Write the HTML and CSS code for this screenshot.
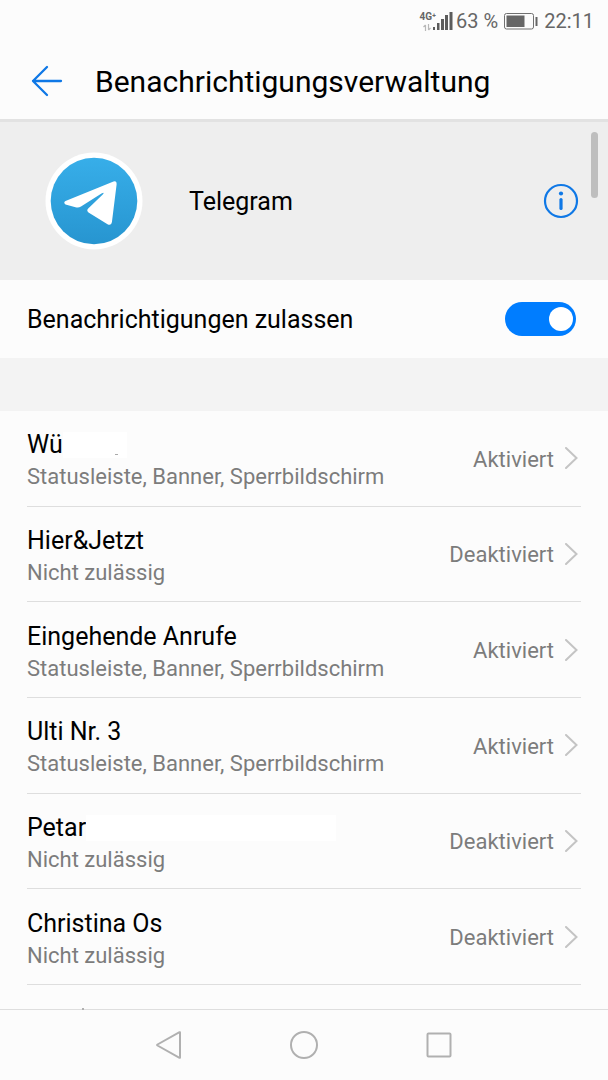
FILE: index.html
```html
<!DOCTYPE html>
<html lang="de">
<head>
<meta charset="utf-8">
<meta name="viewport" content="width=device-width, initial-scale=1">
<title>Benachrichtigungsverwaltung</title>
<link rel="stylesheet" href="styles.css">
</head>
<body>
<div class="status">
  <span class="network"><span class="network-type">4G⁺</span>
    <svg class="transfer" width="8" height="7" viewBox="0 0 8 7"><path d="M2.500 7V1M.5 3 2.500 1M5.500 0v6M7.500 4 5.500 6" fill="none" stroke="#b8b8b8" stroke-width="1.200"/></svg>
  </span>
  <svg width="20" height="18" viewBox="0 0 20 18" fill="#5c5c5c"><path d="M0 15h2v3H0zM4 11h2.500v7H4zM8 7h3v11H8zM12 3h3v15h-3zM16.500 0h3v18h-3z"/></svg>
  <span class="percent">63 %</span>
  <svg class="battery" width="34" height="17" viewBox="0 0 34 17"><rect x=".5" y=".5" width="29" height="15.500" rx="2" fill="none" stroke="#707070"/><path d="M2.500 2.500h18v11.500h-18zM31.500 4h2v9h-2z" fill="#666"/></svg>
  <time>22:11</time>
</div>
<header class="header">
  <button class="icon-button" aria-label="Zurück"><svg width="32" height="32" viewBox="0 0 32 32"><path d="M16 2 2 16l14 14M2 16h28" fill="none" stroke="#0f78e6" stroke-width="2.300" stroke-linecap="round" stroke-linejoin="round"/></svg></button>
  <h1>Benachrichtigungsverwaltung</h1>
</header>
<main class="content">
  <section class="app">
    <svg class="logo" width="98" height="98" viewBox="0 0 98 98">
      <defs><linearGradient id="sky" x2="0" y2="1"><stop stop-color="#37aee9"/><stop offset="1" stop-color="#2795d0"/></linearGradient></defs>
      <circle cx="49" cy="49" r="48.500" fill="#fff"/><circle cx="49" cy="49" r="43.300" fill="url(#sky)"/>
      <path d="M20.500 49 68.500 29.400Q71.800 28.300 71.600 32.500L67 69.500Q66.200 74.200 62.500 72.200L43.500 60.600Q41.200 58.500 43.200 56.600L58 42.300Q59.800 39.600 56.500 41.400L36 54.600Q33.500 56.100 30.500 55.200L20.500 52.400Q18 50.700 20.500 49Z" fill="#fff"/>
    </svg>
    <h2>Telegram</h2>
    <button class="icon-button info" aria-label="App-Info"><svg width="36" height="36" viewBox="0 0 36 36"><circle cx="18" cy="18" r="16" fill="none" stroke="#0f78e6" stroke-width="2.200"/><circle cx="18" cy="10.500" r="2.100" fill="#0f78e6"/><path d="M18 16.500v9" stroke="#0f78e6" stroke-width="3.200" stroke-linecap="round"/></svg></button>
    <span class="scrollbar"></span>
  </section>
  <div class="allow">
    <label for="allow">Benachrichtigungen zulassen</label>
    <input class="switch" id="allow" type="checkbox" role="switch" checked>
  </div>
  <ul class="channels">
    <li><a class="channel" href="#"><span class="text"><span class="name">Wü<span class="mask mask-short"></span></span><span class="detail">Statusleiste, Banner, Sperrbildschirm</span></span><span class="state">Aktiviert</span><svg class="chevron" viewBox="0 0 13 22"><path d="m1 1 10.500 10L1 21"/></svg></a></li>
    <li><a class="channel" href="#"><span class="text"><span class="name">Hier&amp;Jetzt</span><span class="detail">Nicht zulässig</span></span><span class="state">Deaktiviert</span><svg class="chevron" viewBox="0 0 13 22"><path d="m1 1 10.500 10L1 21"/></svg></a></li>
    <li><a class="channel" href="#"><span class="text"><span class="name">Eingehende Anrufe</span><span class="detail">Statusleiste, Banner, Sperrbildschirm</span></span><span class="state">Aktiviert</span><svg class="chevron" viewBox="0 0 13 22"><path d="m1 1 10.500 10L1 21"/></svg></a></li>
    <li><a class="channel" href="#"><span class="text"><span class="name">Ulti Nr. 3</span><span class="detail">Statusleiste, Banner, Sperrbildschirm</span></span><span class="state">Aktiviert</span><svg class="chevron" viewBox="0 0 13 22"><path d="m1 1 10.500 10L1 21"/></svg></a></li>
    <li><a class="channel" href="#"><span class="text"><span class="name">Petar<span class="mask mask-long"></span></span><span class="detail">Nicht zulässig</span></span><span class="state">Deaktiviert</span><svg class="chevron" viewBox="0 0 13 22"><path d="m1 1 10.500 10L1 21"/></svg></a></li>
    <li><a class="channel" href="#"><span class="text"><span class="name">Christina Os</span><span class="detail">Nicht zulässig</span></span><span class="state">Deaktiviert</span><svg class="chevron" viewBox="0 0 13 22"><path d="m1 1 10.500 10L1 21"/></svg></a></li>
  </ul>
</main>
<nav class="nav">
  <button class="icon-button" aria-label="Zurück"><svg width="30" height="30" viewBox="0 0 30 30"><path d="M26 2.500v25q0 .5-.5.300L3.500 15.500q-.8-.5 0-1L25.500 2.200q.5-.2.500.3Z"/></svg></button>
  <button class="icon-button" aria-label="Startbildschirm"><svg width="30" height="30" viewBox="0 0 30 30"><circle cx="15" cy="15" r="13"/></svg></button>
  <button class="icon-button" aria-label="Letzte Apps"><svg width="30" height="30" viewBox="0 0 30 30"><rect x="3.500" y="3.500" width="23" height="23" rx="1"/></svg></button>
</nav>
</body>
</html>
```
FILE: styles.css
```css
* { box-sizing: border-box; }
body {
  margin: 0;
  min-height: 100vh;
  display: flex;
  flex-direction: column;
  background: #fcfcfc;
  color: #000;
  font-family: Roboto, "Liberation Sans", sans-serif;
}
svg { display: block; flex: none; }
h1, h2 { margin: 0; font-weight: 400; }
.icon-button {
  display: flex;
  padding: 0;
  border: 0;
  background: none;
}
.status {
  display: flex;
  justify-content: flex-end;
  align-items: center;
  height: 42px;
  padding-right: 14px;
  color: #666;
  font-size: 20px;
}
.network {
  display: flex;
  flex-direction: column;
  align-items: flex-end;
  margin-right: -3px;
}
.network-type {
  font-size: 10px;
  line-height: 9px;
  font-weight: 700;
}
.transfer { margin: 3px 5px 0 0; }
.percent { margin: 0 6px 0 3px; }
.battery { margin-right: 6px; }
.header {
  display: flex;
  align-items: center;
  gap: 32px;
  height: 80px;
  padding: 0 31px;
  border-bottom: 3px solid #e2e2e2;
}
h1 { padding-top: 3px; font-size: 30px; line-height: 40px; }
.content { flex: 1; }
.app {
  position: relative;
  display: flex;
  align-items: center;
  height: 158px;
  padding: 0 29px 0 45px;
  background: #eee;
}
h2 { margin-left: 46px; font-size: 25px; }
.info { margin-left: auto; }
.scrollbar {
  position: absolute;
  top: 10px;
  right: 10px;
  width: 7px;
  height: 66px;
  border-radius: 4px;
  background: #bebebe;
}
.allow {
  display: flex;
  align-items: center;
  justify-content: space-between;
  height: 78px;
  padding: 0 32px 0 27px;
  font-size: 25px;
}
.switch {
  appearance: none;
  display: flex;
  justify-content: flex-end;
  align-items: center;
  width: 71px;
  height: 34px;
  margin: 0;
  padding: 0 3px;
  border-radius: 17px;
  background: #007dff;
}
.switch::before {
  content: "";
  width: 24px;
  height: 24px;
  border-radius: 50%;
  background: #fff;
}
.switch:not(:checked) { justify-content: flex-start; background: #bbb; }
.channels {
  display: grid;
  grid-auto-rows: 1fr;
  min-height: 627px;
  margin: 0;
  padding: 0 27px;
  border-top: 53px solid #f3f3f3;
  list-style: none;
}
.channels li { display: flex; border-bottom: 1px solid #dedede; }
.channel {
  flex: 1;
  display: flex;
  align-items: center;
  color: #7c7c7c;
  font-size: 22px;
  text-decoration: none;
}
.text { flex: 1; display: flex; flex-direction: column; padding-top: 4px; }
.state { padding-top: 2px; }
.name {
  display: flex;
  align-items: center;
  color: #000;
  font-size: 25px;
  line-height: 34px;
}
.detail { line-height: 30px; }
.mask { height: 26px; background: #fff; }
.mask-short { width: 64px; }
.mask-short::after {
  content: "";
  display: block;
  width: 3px;
  height: 1px;
  margin: 22px 0 0 52px;
  background: #aaa;
}
.mask-long { width: 250px; }
.chevron {
  width: 13px;
  height: 22px;
  margin: 0 3px 0 11px;
  fill: none;
  stroke: #c4c4c4;
  stroke-width: 2;
  stroke-linecap: round;
}
.nav {
  position: relative;
  display: flex;
  justify-content: center;
  align-items: center;
  gap: 105px;
  height: 71px;
  border-top: 1px solid #dedede;
}
/* tip of the next row's title above the navigation bar */
.nav::before {
  content: "";
  position: absolute;
  top: -2px;
  left: 82px;
  width: 2px;
  height: 2px;
  background: #b0b0b0;
}
.nav svg { fill: none; stroke: #b0b0b0; stroke-width: 2; }
```
